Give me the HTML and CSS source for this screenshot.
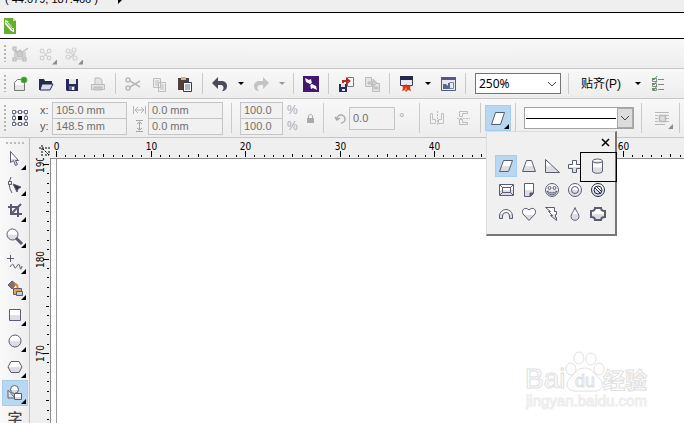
FILE: index.html
```html
<!DOCTYPE html>
<html lang="zh">
<head>
<meta charset="utf-8">
<title>Drawing</title>
<link rel="stylesheet" href="styles.css">
</head>
<body>
<svg class="defs" aria-hidden="true">
  <defs>
    <linearGradient id="shade" x1="0" y1="0" x2="0" y2="1"><stop offset=".5" stop-color="#fff"/><stop offset=".55" stop-color="#dcdce4"/></linearGradient>
  </defs>
</svg>
<header class="status"><span>( 44.079, 187.466 )</span><i class="play"></i></header>
<div class="title">
  <svg width="12" height="16" viewBox="0 0 12 16"><path d="M0 0h9l3 3v13H0z" fill="#63ae2c"/><path d="M9 0v3h3z" fill="#c8e6a8"/><path d="M1 2l3 1 6 8v3l-3-1L1 6z" fill="#fff"/><path d="M2 4l7 8M4 4l5 6" stroke="#63ae2c" fill="none"/></svg>
</div>
<div class="bar bar-small">
  <i class="grip"></i>
  <button class="btn" aria-label="Edit"><svg viewBox="0 0 18 18" fill="none" stroke="#bbb" stroke-width="1.200"><path d="M4 4v10M14 7v7M4 14h10M9 9l8-6M4 4l3 5 3 1"/><path d="M6 7l3-2 3 3v4H6z" fill="#ccc"/><path d="M2 2h3v3H2zM2 13h3v3H2zM12 13h3v3h-3z" fill="#ddd"/></svg></button>
  <button class="btn" aria-label="Group"><svg viewBox="0 0 18 18" fill="none" stroke="#d0d0d0" stroke-width="1.200"><circle cx="5" cy="6" r="1.800"/><circle cx="12" cy="6" r="1.800"/><circle cx="5" cy="13" r="1.800"/><circle cx="12" cy="13" r="1.800"/><path d="M7 8l3 3M10 8l-3 3"/></svg><i class="corner pale"></i></button>
  <button class="btn" aria-label="Ungroup"><svg viewBox="0 0 18 18" fill="none" stroke="#d0d0d0" stroke-width="1.200"><circle cx="5" cy="6" r="2"/><circle cx="11" cy="5" r="2"/><circle cx="5" cy="12" r="2"/><circle cx="12" cy="13" r="2"/><path d="M7 7l4 4M12 8l-5 5"/></svg><i class="corner pale"></i></button>
</div>
<div class="bar bar-main">
  <i class="grip"></i>
  <button class="btn" aria-label="New"><svg viewBox="0 0 18 18" fill="#fff" stroke="#777"><path d="M3.500 7.500l3-3h7v11h-10z"/><path d="M4 10h9v5H4z" fill="#e5e5e5" stroke="none"/><circle cx="13" cy="5" r="3" fill="#379b24" stroke="#62b052"/></svg></button>
  <button class="btn" aria-label="Open"><svg viewBox="0 0 18 18"><path d="M2 15V4h5l1 2h7v3H5L3 15z" fill="#252b4e"/><path d="M5 9h11l-3 6H3z" fill="#d8dbea" stroke="#252b4e"/></svg></button>
  <button class="btn" aria-label="Save"><svg viewBox="0 0 18 18"><path d="M3 4h12v12H4l-1-1z" fill="#252a58"/><path d="M6 4h7v5H6z" fill="#e7e8f2"/><path d="M6 11h6v4H6z" fill="#686d8a"/><path d="M9 12h2v3H9z" fill="#fff"/></svg></button>
  <button class="btn" aria-label="Print"><svg viewBox="0 0 18 18" fill="#e4e4e4" stroke="#bbb"><path d="M6 9V3h5l2 2v4M2.500 9.500h13v5h-13z"/><path d="M5 12h8v3H5z" fill="#ccc"/></svg></button>
  <i class="sep"></i>
  <button class="btn" aria-label="Cut"><svg viewBox="0 0 18 18" fill="none" stroke="#b9b9b9" stroke-width="1.500"><circle cx="4" cy="5" r="2"/><circle cx="4" cy="13" r="2"/><path d="M6 6l10 6M6 12l10-6"/></svg></button>
  <button class="btn" aria-label="Copy"><svg viewBox="0 0 18 18" fill="#eee" stroke="#bdbdbd"><path d="M3.500 3.500h7v9h-7zM8.500 7.500h7v9h-7z"/><path d="M5 6h4M5 8h3M5 10h3M10 10h4M10 12h4M10 14h4"/></svg></button>
  <button class="btn" aria-label="Paste"><svg viewBox="0 0 18 18"><path d="M2 3h11v12H2z" fill="#4f4038"/><path d="M5 2h5v3H5z" fill="#cdb797"/><path d="M7.500 7.500h8v9h-8z" fill="#fff" stroke="#33385b"/><path d="M9 10h5M9 12h5M9 14h5" stroke="#686c85"/></svg></button>
  <i class="sep"></i>
  <button class="btn" aria-label="Undo"><svg viewBox="0 0 18 18"><path d="M1 8l6-6v4h3c4 0 6 2 6 5s-2 5-5 5c3-3 1-6-1-6H7v4z" fill="#4a4b59"/></svg></button>
  <button class="drop" aria-label="Undo list"><i class="caret"></i></button>
  <button class="btn" aria-label="Redo"><svg viewBox="0 0 18 18"><path d="M17 8l-6-6v4H8c-4 0-6 2-6 5s2 5 5 5c-3-3-1-6 1-6h3v4z" fill="#c4c4c4"/></svg></button>
  <button class="drop" aria-label="Redo list"><i class="caret pale"></i></button>
  <i class="sep"></i>
  <button class="btn" aria-label="Connect"><svg viewBox="0 0 18 18"><path d="M1 1h16v16H1z" fill="#43166f"/><path d="M3 3l4 2 2-1 1 5 4 2 1 4-4-2-2 1-1-5-4-2z" fill="#fff"/><path d="M6 11l6-4" stroke="#43166f"/></svg></button>
  <i class="sep"></i>
  <button class="btn" aria-label="Import"><svg viewBox="0 0 18 18"><path d="M10.500 2.500h6v9h-6z" fill="#fff" stroke="#777"/><path d="M2 9h8v8H2z" fill="#282c50"/><path d="M4 9h4v3H4zM5 14h3v2H5z" fill="#dfe5ee"/><path d="M5 8V5h4V2l5 4-5 4V7H7v1z" fill="#b52b21"/></svg></button>
  <button class="btn" aria-label="Export"><svg viewBox="0 0 18 18" fill="#e6e6e6" stroke="#bdbdbd"><path d="M2.500 2.500h6v9h-6zM9.500 8.500h7v8h-7z"/><path d="M5 7h5V4l4 4-4 4V9H5zM11 12h4v2h-4z" fill="#ccc"/></svg></button>
  <i class="sep"></i>
  <button class="btn" aria-label="Launch"><svg viewBox="0 0 18 18"><path d="M2.500 2.500h12v8h-12z" fill="#e8e9f1" stroke="#3a3d59"/><path d="M2 1h13v4H2z" fill="#25294b"/><path d="M8 9l2 2 3-1-1 3 1 3-3-1-2 2-1-2-3 1 1-3-1-3 3 1z" fill="#d93a1a"/><path d="M8 12l1 3H7z" fill="#ffa33a"/></svg></button>
  <button class="drop" aria-label="Launch list"><i class="caret"></i></button>
  <button class="btn" aria-label="Welcome"><svg viewBox="0 0 18 18"><path d="M2.500 2.500h14v13h-14z" fill="#e7e9f3" stroke="#535983"/><path d="M2 2h15v3H2z" fill="#535983"/><path d="M4 9h3l2 2V8h2v6H4z" fill="#5c6690"/><path d="M10.500 7.500h4v6h-4" stroke="#7b84a8" fill="none"/></svg></button>
  <i class="sep"></i>
  <select class="zoom" aria-label="Zoom"><option>250%</option></select>
  <i class="sep sep-wide"></i>
  <button class="snap">贴齐(P)<i class="caret"></i></button>
  <button class="btn" aria-label="Options"><svg viewBox="0 0 18 18" fill="none"><path d="M3.500 3.500h4v3h-4zM3.500 8.500h4v3h-4zM3.500 13.500h4v2h-4zM9 4.500h6M9 9.500h6M9 14.500h6" stroke="#888"/><path d="M3 3l2 2 3-4M3 8l2 2 3-4M3 13l2 2 3-4" stroke="#4e9854"/></svg></button>
</div>
<div class="bar bar-props">
  <i class="grip"></i>
  <button class="btn" aria-label="Origin"><svg viewBox="0 0 18 18" fill="#fff" stroke="#666c80"><path d="M3 3h12v12H3z" fill="none"/><path d="M1.500 1.500h3v3h-3zM7.500 1.500h3v3h-3zM13.500 1.500h3v3h-3zM1.500 7.500h3v3h-3zM13.500 7.500h3v3h-3zM1.500 13.500h3v3h-3zM7.500 13.500h3v3h-3zM13.500 13.500h3v3h-3z"/><path d="M7 7h4v4H7z" fill="#000" stroke="none"/></svg></button>
  <div class="labels"><label for="x">x:</label><label for="y">y:</label></div>
  <div class="pair"><input id="x" value="105.0 mm"><input id="y" value="148.5 mm"></div>
  <div class="labels icons">
    <label for="w" aria-label="Width"><svg width="13" height="12" fill="none" stroke="#b4b4b4"><path d="M.5 2v8M12.500 2v8M2 6h9M5 3L2 6l3 3M8 3l3 3-3 3"/></svg></label>
    <label for="h" aria-label="Height"><svg width="13" height="12" fill="none" stroke="#a4a4a4"><path d="M3 .5h7M3 11.500h7M6.500 2v8M4 4l2.500-2L9 4M4 8l2.500 2L9 8"/></svg></label>
  </div>
  <div class="pair"><input id="w" value="0.0 mm"><input id="h" value="0.0 mm"></div>
  <i class="sep sep-prop"></i>
  <div class="pair narrow"><input id="sx" aria-label="Scale x" value="100.0"><input id="sy" aria-label="Scale y" value="100.0"></div>
  <div class="labels units"><span>%</span><span>%</span></div>
  <button class="lock" aria-label="Lock ratio"><svg width="9" height="11"><path d="M2.500 5V2.500Q4.500 0 6.500 2.500V5" fill="none" stroke="#aaa"/><path d="M1 5h7v5H1z" fill="#aaa"/></svg></button>
  <i class="sep"></i>
  <label class="turn" for="a" aria-label="Angle"><svg width="13" height="13" fill="none" stroke="#aaa" stroke-width="1.500"><path d="M3 7a4 4 0 1 1 4 4M1 5l2 3 3-2"/></svg></label>
  <input class="angle" id="a" value="0.0"><span class="deg">°</span>
  <i class="sep"></i>
  <button class="btn" aria-label="Mirror horizontally"><svg viewBox="0 0 18 18" fill="none" stroke="#c0c0c0"><path d="M2.500 4.500h2v6h3v4h-5zM15.500 4.500h-2v6h-3v4h5z"/><path d="M9.500 2v14" stroke-dasharray="2 1"/></svg></button>
  <button class="btn" aria-label="Mirror vertically"><svg viewBox="0 0 18 18" fill="none" stroke="#bdbdbd"><path d="M5.500 2.500h8v2h-5v3h-3zM5.500 15.500h8v-2h-5v-3h-3z"/><path d="M3 9.500h13" stroke-dasharray="2 1"/></svg></button>
  <i class="sep"></i>
  <button class="btn on" aria-label="Perfect shapes"><svg viewBox="0 0 18 18"><path d="M6.500 3.500h9l-4 12h-9z" fill="#fff" stroke="#555b70"/></svg><i class="corner"></i></button>
  <i class="sep"></i>
  <button class="line" aria-label="Line style"><i></i><span><svg width="10" height="6" fill="none" stroke="#444"><path d="M1 1l4 4 4-4"/></svg></span></button>
  <i class="sep sep-wide"></i>
  <button class="btn" aria-label="Wrap text"><svg viewBox="0 0 18 18" fill="none" stroke="#b8b8b8"><path d="M2 3.500h14M2 6.500h3M13 6.500h3M2 9.500h3M13 9.500h3M2 12.500h3M13 12.500h3M2 15.500h10"/><path d="M6.500 6.500h6v6h-6z" fill="#ddd" stroke-width="1.500"/></svg><i class="corner pale"></i></button>
  <i class="sep"></i>

  <div class="popup">
    <button class="close" aria-label="Close"><svg width="9" height="9" stroke="#000" stroke-width="1.500"><path d="M1 1l7 7M8 1L1 8"/></svg></button>
    <div class="shapes">
      <button class="on" aria-label="Parallelogram"><svg viewBox="0 0 18 18"><path d="M6.500 3.500h9l-4 11h-9z"/></svg></button>
      <button aria-label="Trapezoid"><svg viewBox="0 0 18 18"><path d="M6.500 3.500h5l4 11h-13z"/></svg></button>
      <button aria-label="Triangle"><svg viewBox="0 0 18 18"><path d="M2.500 2.500v13h14z"/></svg></button>
      <button aria-label="Cross"><svg viewBox="0 0 18 18"><path d="M6.500 3.500h4v4h4v4h-4v4h-4v-4h-4v-4h4z"/></svg></button>
      <button class="marked" aria-label="Cylinder"><svg viewBox="0 0 18 18"><path d="M3.500 4v10c0 3 10 3 10 0V4"/><ellipse cx="8.500" cy="4" rx="5" ry="2"/></svg></button>
      <button aria-label="Frame"><svg viewBox="0 0 18 18"><path d="M2.500 3.500h14v11h-14zM5.500 6.500h8v5h-8zM3 4l3 3M16 4l-3 3M3 14l3-3M16 14l-3-3"/></svg></button>
      <button aria-label="Note"><svg viewBox="0 0 18 18"><path d="M4.500 2.500h9v10l-3 3h-6z"/><path d="M13 12l-3 3v-3z" fill="#555b70"/></svg></button>
      <button aria-label="Smiley"><svg viewBox="0 0 18 18"><circle cx="9" cy="9" r="6.500"/><circle cx="6.500" cy="7" r="1.500"/><circle cx="11.500" cy="7" r="1.500"/><path d="M4 10q5 4 10 0l-2 3q-3 2-6 0z"/></svg></button>
      <button aria-label="Ring"><svg viewBox="0 0 18 18"><circle cx="9" cy="9" r="6.500"/><circle cx="9" cy="9" r="3.500"/></svg></button>
      <button aria-label="Prohibited"><svg viewBox="0 0 18 18" class="dark"><circle cx="9" cy="9" r="6.500"/><circle cx="9" cy="9" r="4"/><path d="M6 7l6 6M7 5l6 6"/></svg></button>
      <button aria-label="Arch"><svg viewBox="0 0 18 18"><path d="M2.500 13.500V11a6.500 6.500 0 0 1 13 0v2.500h-3V11a3.500 3.500 0 0 0-7 0v2.500z"/></svg></button>
      <button aria-label="Heart"><svg viewBox="0 0 18 18"><path d="M9 15.500L3 9C1 5 5 1 9 5c4-4 8 0 6 4z"/></svg></button>
      <button aria-label="Lightning"><svg viewBox="0 0 18 18"><path d="M2.500 2.500h9v4h2v3h-1v3h1v3l-6-5h2l-4-4h2z"/></svg></button>
      <button aria-label="Drop"><svg viewBox="0 0 18 18"><path d="M9 2.500c1 4 4 6 4 9 0 5-8 5-8 0 0-3 3-5 4-9z"/></svg></button>
      <button aria-label="Plaque"><svg viewBox="0 0 18 18" class="bold"><path d="M6 3h6q0 3 4 3v6q-4 0-4 3H6q0-3-4-3V6q4 0 4-3z"/></svg></button>
    </div>
  </div>
</div>
<main>
  <nav class="tools">
    <i class="grip-h"></i>
    <button aria-label="Pick"><svg viewBox="0 0 18 18"><path d="M4.500 1.500v11l3-2 2 5 2-1-2-4h3z"/></svg><i class="corner"></i></button>
    <button aria-label="Shape"><svg viewBox="0 0 18 18"><path d="M5 1Q1 9 6 17" fill="none"/><path d="M2.500 5.500h3v3h-3z"/><path d="M7 8l8 3-3 2-1 3z" fill="#303443"/></svg><i class="corner"></i></button>
    <button aria-label="Crop"><svg viewBox="0 0 18 18"><path d="M5 2v10h11M2 5h10v10M6 11l9-9" fill="none" stroke-width="2"/></svg><i class="corner"></i></button>
    <button aria-label="Zoom"><svg viewBox="0 0 18 18"><circle cx="6.500" cy="6.500" r="5.500"/><path d="M10 10l6 6" stroke-width="3"/></svg><i class="corner"></i></button>
    <button aria-label="Freehand"><svg viewBox="0 0 18 18"><path d="M4.500 1v7M1 4.500h7M4 13q3-5 4-1t3 0 3 1 2-1" fill="none"/></svg><i class="corner"></i></button>
    <button aria-label="Fill"><svg viewBox="0 0 18 18"><path d="M2 5l4-4 4 3-4 5z" fill="#83756d"/><path d="M8 4q5 0 3 6" fill="none" stroke="#dc8424" stroke-width="2"/><path d="M7.500 8.500h8v6h-8z" fill="#eba04c"/><path d="M10.500 11.500h6v4h-6z" fill="#ccc"/></svg><i class="corner"></i></button>
    <button aria-label="Rectangle"><svg viewBox="0 0 18 18"><path d="M3.500 3.500h11v11h-11z"/></svg><i class="corner"></i></button>
    <button aria-label="Ellipse"><svg viewBox="0 0 18 18"><circle cx="9" cy="9" r="6"/></svg><i class="corner"></i></button>
    <button aria-label="Polygon"><svg viewBox="0 0 18 18"><path d="M5 3.500h8l3 5.500-3 5.500H5L2 9z"/></svg><i class="corner"></i></button>
    <button class="on" aria-label="Basic shapes"><svg viewBox="0 0 18 18"><path d="M2 6v8h7z"/><circle cx="8.500" cy="5.500" r="4"/><path d="M8.500 9.500h7v6h-7z"/></svg><i class="corner"></i></button>
    <button class="text-tool">字</button>
  </nav>
  <section class="workspace">
    <svg class="ruler-x" id="ruler-x"></svg>
    <svg class="ruler-y" id="ruler-y"></svg>
    <div class="canvas">
      <svg class="watermark" width="124" height="64" viewBox="0 0 124 64">
        <g fill="#fff" stroke="#e0e0e0">
          <text x="0" y="39" font-size="28">Bai</text>
          <ellipse cx="46" cy="20" rx="5" ry="6"/><ellipse cx="54" cy="9" rx="5" ry="6"/><ellipse cx="66" cy="10" rx="5" ry="6"/><ellipse cx="74" cy="20" rx="5" ry="6"/>
          <path d="M60 19c7 0 9 6 15 11 6 8 0 13-8 12H52c-8 1-13-5-8-12 6-5 7-11 16-11z"/>
          <text x="50" y="38" font-size="18">du</text>
          <text x="78" y="39" font-size="22" font-weight="700">经验</text>
          <text x="1" y="57" font-size="15" stroke="#ececec">jingyan.baidu.com</text>
        </g>
      </svg>
    </div>
  </section>
</main>
<script src="rulers.js"></script>
</body>
</html>
```
FILE: styles.css
```css
* { box-sizing: border-box; }
body {
  margin: 0; height: 100vh; overflow: hidden;
  display: flex; flex-direction: column;
  background: #efefef; color: #000;
  font: 11px/16px "Liberation Sans", "Noto Sans CJK SC", sans-serif;
}
button, input, select { font: inherit; color: inherit; margin: 0; padding: 0; border: 0; background: none; border-radius: 0; }
svg { display: block; flex: none; }
.defs { position: absolute; width: 0; height: 0; }

.status { height: 12px; flex: none; display: flex; align-items: center; gap: 20px; padding-left: 5px; overflow: hidden; font-size: 11px; line-height: 12px; }
.status span { margin-top: -14px; }
.play { border: 4px solid transparent; border-left-color: #000; border-right: 0; margin-top: -12px; }
.title { height: 27px; flex: none; display: flex; align-items: center; padding-left: 4px; background: #fff; border: solid #000; border-width: 1px 0; }

.bar { flex: none; display: flex; align-items: center; padding-left: 7px; position: relative; border-bottom: 1px solid #c6c6c6; background: linear-gradient(#f8f8f8, #ededed); }
.bar-small { height: 30px; }
.bar-main { height: 30px; }
.bar-props { height: 39px; }
.grip { position: absolute; left: 4px; top: 6px; bottom: 6px; width: 2px; background: repeating-linear-gradient(#b5b5b5 0 2px, transparent 2px 4px); }
.btn { width: 26px; height: 26px; flex: none; display: grid; place-items: center; position: relative; }
.btn svg { width: 18px; height: 18px; }
.corner { position: absolute; right: 2px; bottom: 2px; width: 5px; height: 5px; background: #000; clip-path: polygon(100% 0, 100% 100%, 0 100%); }
.corner.pale { background: #8c8c8c; }
.sep { width: 9px; align-self: stretch; flex: none; margin: 4px 0; background: linear-gradient(#cacaca, #cacaca) center / 1px 100% no-repeat; }
.sep-wide { width: 15px; }
.drop { width: 15px; height: 26px; flex: none; display: grid; place-items: center; }
.caret { border: 3px solid transparent; border-top-color: #000; border-bottom: 0; }
.caret.pale { border-top-color: #999; }
.zoom {
  width: 86px; height: 21px; margin-left: 5px; padding-left: 3px; border: 1px solid #747474; appearance: none; font: 12px/16px "Noto Sans", sans-serif;
  background: linear-gradient(45deg, transparent 43%, #555 43% 57%, transparent 57%) right 4px center / 5px 5px no-repeat, linear-gradient(-45deg, transparent 43%, #555 43% 57%, transparent 57%) right 8px center / 5px 5px no-repeat, #fff;
  background: url("data:image/svg+xml,%3Csvg xmlns='http://www.w3.org/2000/svg' width='10' height='6' fill='none' stroke='%23444'%3E%3Cpath d='M1 1l4 4 4-4'/%3E%3C/svg%3E") right 3px center no-repeat, #fff;
}
.snap { display: flex; align-items: center; gap: 14px; margin: 0 4px 0 5px; font-size: 12px; }

.labels { display: grid; grid-template-rows: 16px 16px; width: 15px; flex: none; margin-left: 7px; color: #555; align-items: center; }
.labels.icons { margin: 0 2px 0 6px; width: 13px; }
.labels.units { margin-left: 4px; width: 14px; font-size: 12px; color: #aaa; }
.pair { width: 75px; flex: none; display: grid; margin-left: -3px; }
.pair input + input { margin-top: -1px; }
.pair input { width: 100%; height: 17px; }
.pair input, .angle { border: 1px solid #c5c5c5; background: #f1f1f1; padding: 0 3px; color: #6f6f6f; }
.icons + .pair { margin-left: 0; }
.sep-prop { width: 17px; }
.pair.narrow { width: 43px; margin-left: 0; }
.lock { width: 18px; height: 20px; display: grid; place-items: center; }
.turn { margin: 0 2px 0 6px; }
.angle { width: 46px; height: 23px; flex: none; }
.deg { width: 20px; padding-left: 4px; font-size: 14px; color: #aaa; }
.on { background: #b8d8f2; outline: 1px solid #a5cdec; outline-offset: -1px; }
.line { width: 110px; height: 22px; margin-left: 4px; flex: none; display: flex; align-items: center; border: 1px solid #a2a2a2; background: #fff; padding-left: 1px; }
.line i { flex: 1; border-top: 1px solid #000; }
.line span { width: 16px; align-self: stretch; margin-left: 1px; display: grid; place-items: center; background: #dcdcdc; border: 1px solid #ababab; }

.popup { position: absolute; z-index: 2; left: 486px; top: 32px; width: 131px; height: 105px; background: #f0f0f0; border: 1px solid #ddd; border-right: 2px solid #777; border-bottom: 2px solid #777; padding: 0 0 0 8px; }
.close { display: grid; place-items: center; width: 20px; height: 20px; margin-left: auto; }
.shapes { display: grid; grid-template-columns: repeat(5, 22px); grid-auto-rows: 24px; column-gap: 1px; align-items: center; padding-top: 2px; }
.shapes button { width: 22px; height: 22px; display: grid; place-items: center; position: relative; }
.shapes svg { width: 18px; height: 18px; }
.shapes svg, .tools svg { fill: url(#shade); stroke: #5a5d70; }
.shapes .dark { stroke: #252d48; }
.shapes .bold { stroke-width: 2; }
.marked::after { content: ""; position: absolute; left: -7px; top: -3px; width: 35px; height: 28px; border: 1px solid #000; }

main { flex: 1; min-height: 0; display: flex; overflow: hidden; }
.tools { width: 30px; flex: none; padding-left: 2px; border-right: 1px solid #c0c0c0; background: linear-gradient(90deg, #f9f9f9, #eee); }
.tools button { width: 26px; height: 26px; display: grid; place-items: center; position: relative; }
.tools svg { width: 18px; height: 18px; }
.grip-h { display: block; height: 8px; margin-left: 4px; width: 18px; background: repeating-linear-gradient(90deg, #bbb 0 2px, transparent 2px 4px) 0 4px / 100% 2px no-repeat; }
.tools .text-tool { font-size: 15px; font-weight: 500; color: #444; }
.workspace { flex: 1; min-width: 0; display: grid; grid-template: 20px 1fr / 20px 1fr; }
.ruler-x { grid-column: 1 / 3; width: 100%; height: 20px; }
.ruler-y { width: 20px; height: 100%; }
.ruler-x, .ruler-y { background: #efefef; font-size: 10px; font-family: "DejaVu Sans Condensed", "Liberation Sans", sans-serif; overflow: hidden; }
.canvas { min-width: 0; min-height: 0; background: linear-gradient(#999, #999) 5px 0 / 1px 100% no-repeat, #fff; border: solid #8a8a8a; border-width: 1px 0 0 1px; display: flex; align-items: flex-end; justify-content: flex-end; padding: 0 35px 10px 0; }
.watermark { font-family: "Liberation Sans", "Noto Sans CJK SC", sans-serif; overflow: visible; }
```
FILE: rulers.js
```js
const STEP = 9.45;

function tickPath(count, draw) {
  let d = "";
  for (let i = 0; i < count; i++) d += draw(i, i % 10 === 0 ? 6 : i % 5 === 0 ? 3 : 2);
  return `<path d="${d}" stroke="#000" fill="none"/>`;
}

function drawRulers() {
  const rx = document.getElementById("ruler-x");
  const ry = document.getElementById("ruler-y");
  const xs = Math.ceil(rx.clientWidth / STEP);
  const ys = Math.ceil(ry.clientHeight / STEP);
  const px = i => Math.round(26 + i * STEP) + 0.5;
  const py = i => Math.round(6 + i * STEP) + 0.5;

  let html = tickPath(xs, (i, h) => `M${px(i)} 19v${-h}`);
  for (let i = 0; i < xs; i += 10) html += `<text x="${px(i)}" y="12" text-anchor="middle">${i}</text>`;
  html += '<path d="M9 10h12M12 7v12M13 11l6 6M19 13v4h-4" stroke="#000" fill="none" stroke-dasharray="2 1"/>';
  rx.innerHTML = html;

  html = tickPath(ys, (i, h) => `M19 ${py(i)}h${-h}`);
  for (let i = 0; i < ys; i += 10) html += `<text transform="translate(14 ${py(i)}) rotate(-90)" text-anchor="middle">${190 - i}</text>`;
  ry.innerHTML = html;
}

drawRulers();
addEventListener("resize", drawRulers);
```
